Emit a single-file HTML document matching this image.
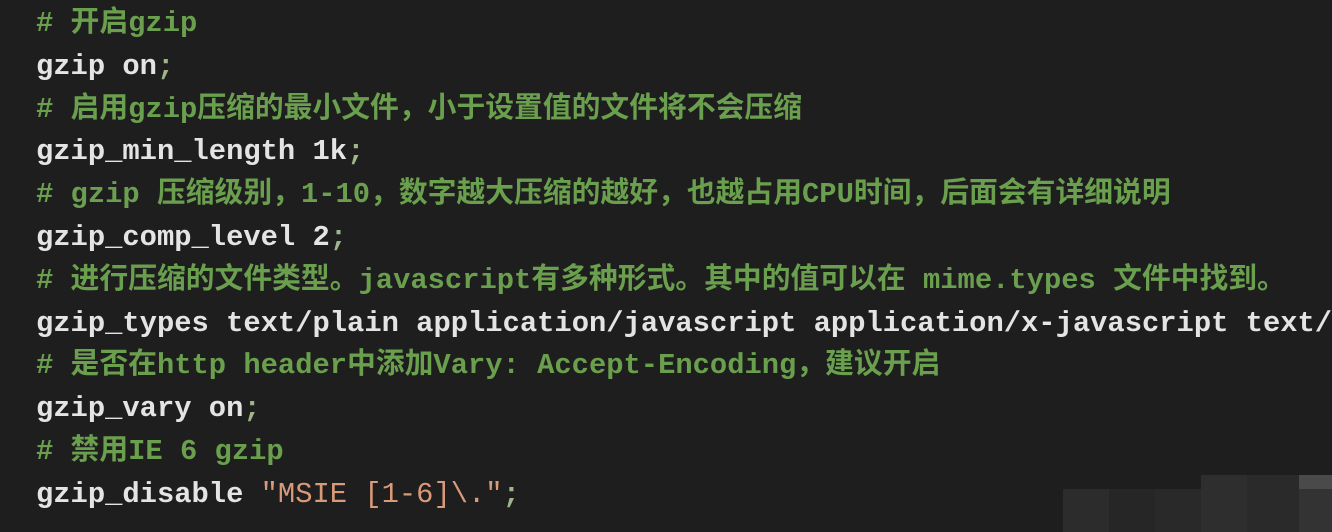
<!DOCTYPE html>
<html><head><meta charset="utf-8"><style>
html,body{margin:0;padding:0;width:1332px;height:532px;overflow:hidden;background:#1e1e1e;}
pre{margin:0;position:absolute;left:36px;top:3px;font-family:"Liberation Mono","Noto Sans CJK SC",monospace;font-size:28.8px;line-height:42.8px;color:#e4e4e4;font-weight:bold;white-space:pre;}
.c{color:#6a9f4e;font-weight:bold;}
.s{color:#d99a7a;font-weight:normal;}
.p{color:#9fb58a;}
.b{position:absolute;}
</style></head><body>
<pre><span class="c"># 开启gzip</span>
gzip on<span class="p">;</span>
<span class="c"># 启用gzip压缩的最小文件，小于设置值的文件将不会压缩</span>
gzip_min_length 1k<span class="p">;</span>
<span class="c"># gzip 压缩级别，1-10，数字越大压缩的越好，也越占用CPU时间，后面会有详细说明</span>
gzip_comp_level 2<span class="p">;</span>
<span class="c"># 进行压缩的文件类型。javascript有多种形式。其中的值可以在 mime.types 文件中找到。</span>
gzip_types text/plain application/javascript application/x-javascript text/
<span class="c"># 是否在http header中添加Vary: Accept-Encoding，建议开启</span>
gzip_vary on<span class="p">;</span>
<span class="c"># 禁用IE 6 gzip</span>
gzip_disable <span class="s">"MSIE [1-6]\."</span><span class="p">;</span></pre>
<div class="b" style="left:1063px;top:489px;width:46px;height:43px;background:#2c2c2c"></div>
<div class="b" style="left:1109px;top:489px;width:46px;height:43px;background:#262626"></div>
<div class="b" style="left:1155px;top:489px;width:46px;height:43px;background:#292929"></div>
<div class="b" style="left:1201px;top:475px;width:46px;height:57px;background:#2e2e2e"></div>
<div class="b" style="left:1247px;top:475px;width:52px;height:57px;background:#2a2a2a"></div>
<div class="b" style="left:1299px;top:475px;width:33px;height:14px;background:#4a4a4a"></div>
<div class="b" style="left:1299px;top:489px;width:33px;height:43px;background:#333"></div>
</body></html>
